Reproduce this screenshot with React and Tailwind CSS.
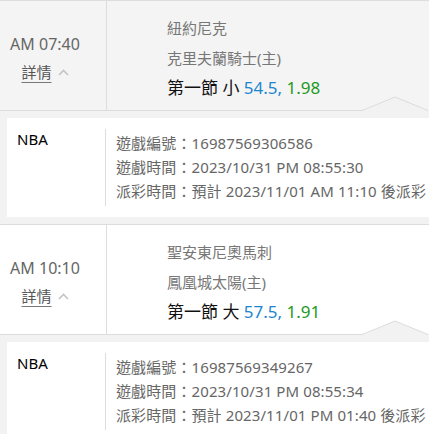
import React from "react";

const entries = [
  {
    time: "AM 07:40",
    away: "紐約尼克",
    home: "克里夫蘭騎士(主)",
    bet: "小",
    line: "54.5",
    odds: "1.98",
    id: "16987569306586",
    gameTime: "2023/10/31 PM 08:55:30",
    payout: "預計 2023/11/01 AM 11:10 後派彩",
    headerBg: "bg-[#f4f4f4]",
  },
  {
    time: "AM 10:10",
    away: "聖安東尼奧馬刺",
    home: "鳳凰城太陽(主)",
    bet: "大",
    line: "57.5",
    odds: "1.91",
    id: "16987569349267",
    gameTime: "2023/10/31 PM 08:55:34",
    payout: "預計 2023/11/01 PM 01:40 後派彩",
    headerBg: "bg-white",
  },
];

function Caret() {
  return (
    <svg width="11" height="7" viewBox="0 0 11 7" className="ml-[6px]">
      <polyline points="1,6 5.5,1.5 10,6" fill="none" stroke="#c4c4c4" strokeWidth="1.6" />
    </svg>
  );
}

function Entry({ e }) {
  return (
    <div>
      <div className={`flex h-[109px] ${e.headerBg}`}>
        <div className="w-[107px] shrink-0 border-r border-[#dddddd] pr-[16px] pt-[31px] flex flex-col items-center">
          <div className="text-[16px] leading-[24px] text-[#666666]">{e.time}</div>
          <div className="mt-[4px] flex items-center h-[24px]">
            <span className="text-[15px] leading-[24px] text-[#555555] underline underline-offset-[4px] decoration-[#777777]">
              詳情
            </span>
            <Caret />
          </div>
        </div>
        <div className="pl-[60px] pt-[12px] whitespace-nowrap">
          <div className="text-[15px] leading-[30px] text-[#777777]">{e.away}</div>
          <div className="text-[15px] leading-[30px] text-[#777777]">{e.home}</div>
          <div className="text-[17px] leading-[30px] text-[#111111]">
            第一節 {e.bet} <span className="text-[#1d86cf]">{e.line},</span>{" "}
            <span className="text-[#22991f]">{e.odds}</span>
          </div>
        </div>
      </div>
      <div className="relative border-t border-b border-[#dddddd] bg-[#f2f2f2] pt-[7px] pb-[7px] pl-[7px]">
        <svg
          width="68"
          height="16"
          viewBox="0 0 68 16"
          className="absolute left-[362px] top-[-15px]"
        >
          <polygon points="0,15 33,1 66,15" fill="#f2f2f2" />
          <rect x="0" y="14" width="68" height="2" fill="#f2f2f2" />
          <polyline points="0,14.5 33,1 66,14.5" fill="none" stroke="#dcdcdc" strokeWidth="1" />
        </svg>
        <div className="flex bg-white py-[11px] w-[460px]">
          <div className="w-[98px] shrink-0 pl-[10px] text-[15px] leading-[20px] font-normal text-black">
            NBA
          </div>
          <div className="border-l border-[#dddddd] pl-[10px] pt-[2px] pb-[3px] whitespace-nowrap text-[15px] leading-[24px] tracking-[0.1px] text-[#666666]">
            <div>遊戲編號：{e.id}</div>
            <div>遊戲時間：{e.gameTime}</div>
            <div>派彩時間：{e.payout}</div>
          </div>
        </div>
      </div>
    </div>
  );
}

export default function App() {
  return (
    <div
      className="w-[429px] h-[434px] overflow-hidden border-t border-[#dddddd] bg-white"
      style={{ fontFamily: '"Noto Sans", "Noto Sans CJK TC", sans-serif' }}
    >
      {entries.map((e, i) => (
        <Entry key={i} e={e} />
      ))}
    </div>
  );
}
